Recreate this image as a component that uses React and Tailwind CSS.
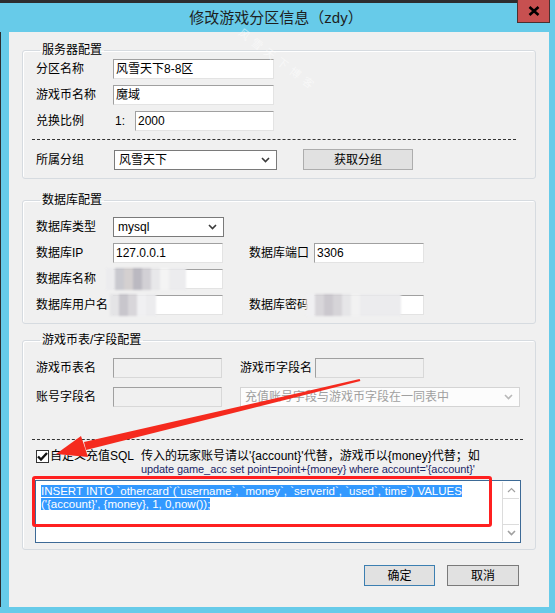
import React from 'react';

const Chevron = ({ color = '#3a3a3a' }) => (
  <svg width="9" height="6" viewBox="0 0 9 6" className="shrink-0">
    <polyline points="1,1 4.5,4.5 8,1" fill="none" stroke={color} strokeWidth="1.6" />
  </svg>
);

const TextBox = ({ w, value, disabled, children }) => (
  <div
    className={`relative h-[20px] ${w} border border-t-[#a0a0a0] border-l-[#a0a0a0] ${
      disabled ? 'bg-[#f0f0f0] border-r-[#d8d8d8] border-b-[#d8d8d8]' : 'bg-white border-r-[#e3e3e3] border-b-[#e3e3e3]'
    } pl-[2px] text-[12px] leading-[18px] text-black`}
  >
    {value}
    {children}
  </div>
);

const Select = ({ w, value, disabled }) => (
  <div
    className={`h-[20px] ${w} border flex items-center justify-between pl-[4px] pr-[6px] text-[12px] ${
      disabled ? 'border-[#d4d4d4] bg-[#fcfcfc] text-[#a0a0a0]' : 'border-[#7a7a7a] bg-white text-black'
    }`}
  >
    <span>{value}</span>
    <Chevron color={disabled ? '#b8b8b8' : '#3a3a3a'} />
  </div>
);

const Mosaic = ({ blocks, left, width }) => (
  <div className={`absolute top-[-2px] ${left} ${width} h-[22px] flex bg-[#ececee] blur-[1px]`}>
    {blocks.map((c, i) => (
      <div key={i} className="h-full w-[9px]" style={{ background: c }} />
    ))}
  </div>
);

const Group = ({ title, className, children }) => (
  <fieldset className={`mx-[13px] border border-[#d6dbe0] rounded-[3px] shadow-[inset_1px_1px_0_#ffffff] px-[13px] ${className}`}>
    <legend className="ml-[4px] px-[2px] text-[12px] leading-[16px] text-black">{title}</legend>
    {children}
  </fieldset>
);

const Label = ({ w, children }) => <div className={`${w} shrink-0 text-[12px] text-black`}>{children}</div>;

export default function App() {
  return (
    <div className="relative w-[555px] h-[613px] bg-[#67cbe9] flex flex-col overflow-hidden font-['Liberation_Sans','Noto_Sans_CJK_SC',sans-serif]">
      {/* title bar */}
      <div className="h-[32px] flex shrink-0">
        <div className="w-[517px] flex flex-col">
          <div className="h-[3px] bg-[#2d2d2f]" />
          <div className="h-[29px] pl-[35px] text-center text-[15px] leading-[30px] text-[#1e1e1e]">修改游戏分区信息（zdy）</div>
        </div>
        <div className="w-[33px] h-[23px] bg-[#c75050] border border-[#4a3030] border-t-0 flex items-center justify-center">
          <svg width="12" height="10" viewBox="0 0 12 10">
            <path d="M1.5 1 L10.5 9 M10.5 1 L1.5 9" stroke="#000" strokeWidth="2.6" />
          </svg>
        </div>
      </div>

      {/* body */}
      <div className="flex flex-1 border-l border-[#2d2d2f]">
        <div className="w-[8px]" />
        <div className="w-[540px] h-[575px] bg-[#f0f0f0] flex flex-col">
          {/* server */}
          <Group title="服务器配置" className="mt-[10px] pb-[8px]">
            <div className="pt-[1px] flex flex-col gap-[6px]">
              <div className="flex items-center">
                <Label w="w-[77px]">分区名称</Label>
                <TextBox w="w-[161px]" value="风雪天下8-8区" />
              </div>
              <div className="flex items-center">
                <Label w="w-[77px]">游戏币名称</Label>
                <TextBox w="w-[161px]" value="魔域" />
              </div>
              <div className="flex items-center">
                <Label w="w-[77px]">兑换比例</Label>
                <div className="w-[22px] pl-[2px] text-[12px]">1:</div>
                <TextBox w="w-[139px]" value="2000" />
              </div>
            </div>
            <div className="mt-[8px] -ml-[4px] mr-[6px] border-t border-dashed border-[#333]" />
            <div className="mt-[9px] flex items-center">
              <Label w="w-[78px]">所属分组</Label>
              <Select w="w-[163px]" value="风雪天下" />
              <div className="ml-[26px] w-[110px] h-[21px] bg-[#e1e1e1] border border-[#adadad] flex items-center justify-center text-[12px]">
                获取分组
              </div>
            </div>
          </Group>

          {/* database */}
          <Group title="数据库配置" className="mt-[13px] pb-[8px]">
            <div className="pt-[9px] flex flex-col gap-[6px]">
              <div className="flex items-center">
                <Label w="w-[77px]">数据库类型</Label>
                <Select w="w-[111px]" value="mysql" />
              </div>
              <div className="flex items-center">
                <Label w="w-[77px]">数据库IP</Label>
                <TextBox w="w-[110px]" value="127.0.0.1" />
                <div className="w-[26px]" />
                <Label w="w-[65px]">数据库端口</Label>
                <TextBox w="w-[110px]" value="3306" />
              </div>
              <div className="flex items-center">
                <Label w="w-[77px]">数据库名称</Label>
                <TextBox w="w-[110px]">
                  <Mosaic left="-left-[8px]" width="w-[80px]" blocks={['#ececee', '#c9c9cf', '#d4d0d0', '#bbb9c1', '#d2d0d5', '#e8e8ea', '#f4f4f4']} />
                </TextBox>
              </div>
              <div className="flex items-center">
                <Label w="w-[77px]">数据库用户名</Label>
                <TextBox w="w-[110px]">
                  <Mosaic left="-left-[4px]" width="w-[46px]" blocks={['#e4e4e6', '#c8c6cc', '#d8d6da', '#f0f0f2']} />
                </TextBox>
                <div className="w-[26px]" />
                <Label w="w-[65px]">数据库密码</Label>
                <TextBox w="w-[110px]">
                  <Mosaic left="-left-[9px]" width="w-[95px]" blocks={['#f0f0f2', '#d8d6da', '#cbc8ce', '#d6d4d8', '#e6e6e8', '#f2f2f2']} />
                </TextBox>
              </div>
            </div>
          </Group>

          {/* game coin */}
          <Group title="游戏币表/字段配置" className="mt-[8px] pb-[6px]">
            <div className="pt-[10px] flex flex-col gap-[9px]">
              <div className="flex items-center">
                <Label w="w-[77px]">游戏币表名</Label>
                <TextBox w="w-[109px]" disabled />
                <div className="w-[18px]" />
                <Label w="w-[75px]">游戏币字段名</Label>
                <TextBox w="w-[109px]" disabled />
              </div>
              <div className="flex items-center">
                <Label w="w-[77px]">账号字段名</Label>
                <TextBox w="w-[109px]" disabled />
                <div className="w-[18px]" />
                <Select w="w-[280px]" value="充值账号字段与游戏币字段在一同表中" disabled />
              </div>
            </div>
            <div className="mt-[32px] -ml-[4px] -mr-[1px] border-t border-dashed border-[#333]" />
            <div className="mt-[10px] flex items-start text-[12px] leading-[13px]">
              <div className="w-[13px] h-[13px] border border-[#333] bg-white flex items-center justify-center shrink-0">
                <svg width="11" height="9" viewBox="0 0 11 9">
                  <path d="M1 4.5 L4 7.5 L10 1" fill="none" stroke="#111" strokeWidth="2.4" />
                </svg>
              </div>
              <div className="ml-[1px] w-[91px] text-black">自定义充值SQL</div>
              <div className="flex flex-col whitespace-nowrap">
                <div className="text-black">传入的玩家账号请以'{'{account}'}'代替，游戏币以{'{money}'}代替；如</div>
                <div className="text-[11px] tracking-[-0.1px] text-[#1c2868]">update game_acc set point=point+{'{money}'} where account='{'{account}'}'</div>
              </div>
            </div>
            <div className="mt-[4px] -ml-[1px] mr-[1px] h-[63px] bg-white border border-[#3d6a96] flex">
              <div className="flex-1 pl-[5px] pt-[4px] text-[11.5px] leading-[13px] text-white whitespace-nowrap overflow-hidden">
                <div><span className="bg-[#3399ff]">INSERT INTO `othercard`(`username`, `money`, `serverid`, `used`,`time`) VALUES</span></div>
                <div><span className="bg-[#3399ff]">('{'{account}'}', {'{money}'}, 1, 0,now());</span></div>
              </div>
              <div className="w-[17px] my-[1px] mr-[1px] flex flex-col justify-between border-l border-[#dcdcdc]">
                <div className="h-[17px] border-b border-[#dcdcdc] flex items-center justify-center">
                  <svg width="9" height="6" viewBox="0 0 9 6"><polyline points="1,5 4.5,1.5 8,5" fill="none" stroke="#a0a0a0" strokeWidth="1.2" /></svg>
                </div>
                <div className="h-[17px] border-t border-[#dcdcdc] flex items-center justify-center">
                  <Chevron color="#a0a0a0" />
                </div>
              </div>
            </div>
          </Group>

          {/* buttons */}
          <div className="mt-[15px] flex justify-end gap-[12px] pr-[30px]">
            <div className="w-[71px] h-[21px] bg-[#e1e1e1] border border-[#3c7fb1] flex items-center justify-center text-[12px]">确定</div>
            <div className="w-[72px] h-[21px] bg-[#e1e1e1] border border-[#7a7a7a] flex items-center justify-center text-[12px]">取消</div>
          </div>
        </div>
      </div>
      <div className="h-[6px] shrink-0" />

      {/* watermark */}
      <div className="absolute left-[230px] top-[52px] rotate-[37deg] text-[11px] tracking-[5px] text-white/50 pointer-events-none">风雪天下博客</div>

      {/* annotation: red box */}
      <div className="absolute left-[32px] top-[476px] w-[460px] h-[51px] border-[3px] border-[#ff2020] rounded-[3px] pointer-events-none" />

      {/* annotation: arrow */}
      <svg className="absolute left-0 top-0 pointer-events-none" width="555" height="613" viewBox="0 0 555 613">
        <polygon points="360.4,381 359.6,379 84,442 86,450" fill="#f52a1e" />
        <polygon points="56,454 81,436 88,457" fill="#f52a1e" />
      </svg>
    </div>
  );
}
